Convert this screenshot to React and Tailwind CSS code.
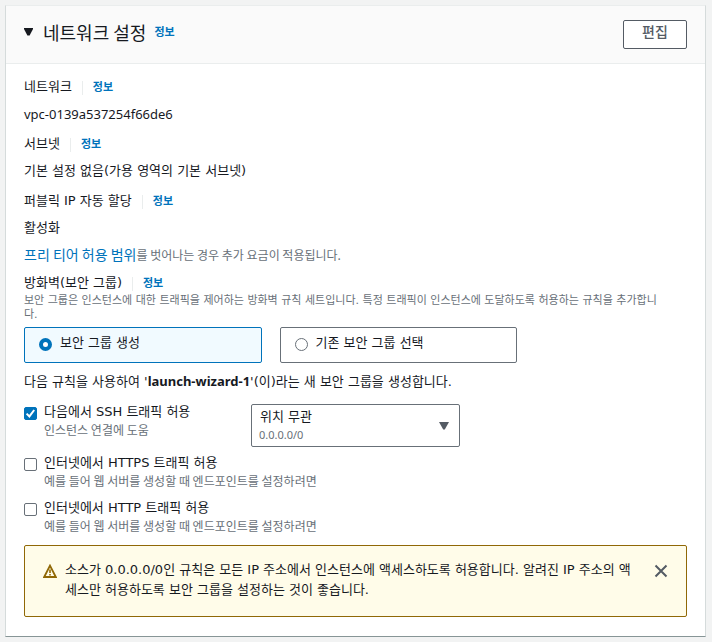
import { useId } from "react";

function InfoLink() {
  return (
    <a href="#info" className="pt-0.5 text-[11px] font-bold text-[#0073bb]">
      정보
    </a>
  );
}

function FieldLabel({ children }) {
  return (
    <div className="flex h-[22px] items-center leading-[22px]">
      <span>{children}</span>
      <span className="mr-2.5 ml-2.5 h-3.5 w-px translate-y-px bg-[#eaeded]" />
      <InfoLink />
    </div>
  );
}

function Field({ label, children }) {
  return (
    <div className="flex flex-col gap-[5px] leading-[22px]">
      <FieldLabel>{label}</FieldLabel>
      {children}
    </div>
  );
}

function RadioTile({ label, defaultChecked }) {
  return (
    <label className="flex h-9 w-full items-center gap-2 rounded-xs border border-[#687078] bg-white px-3.5 pb-1 has-checked:border-[#0073bb] has-checked:bg-[#f1faff]">
      <input
        type="radio"
        name="security-group"
        defaultChecked={defaultChecked}
        className="mt-0.5 size-[13px] shrink-0 appearance-none rounded-full border border-[#687078] bg-white checked:border-4 checked:border-[#0073bb]"
      />
      <span>{label}</span>
    </label>
  );
}

function CheckRow({ label, description, defaultChecked }) {
  const id = useId();
  return (
    <div className="flex gap-[7px]">
      <span className="mt-[5px] grid size-[13px] shrink-0">
        <input
          id={id}
          type="checkbox"
          aria-describedby={id + "-description"}
          defaultChecked={defaultChecked}
          className="peer col-start-1 row-start-1 size-[13px] appearance-none rounded-xs border border-[#687078] bg-white checked:border-[#0073bb] checked:bg-[#0073bb]"
        />
        <svg
          viewBox="0 0 13 13"
          className="pointer-events-none invisible col-start-1 row-start-1 size-[13px] peer-checked:visible"
          fill="none"
          stroke="#fff"
          strokeWidth="2"
        >
          <path d="M2.6 6.6 5.4 9.4 10.2 3" />
        </svg>
      </span>
      <div>
        <label htmlFor={id} className="block leading-5">
          {label}
        </label>
        <p
          id={id + "-description"}
          className="font-['Noto_Sans_CJK_KR',sans-serif] text-xs leading-[15px] text-[#687078]"
        >
          {description}
        </p>
      </div>
    </div>
  );
}

export default function App() {
  return (
    <div className="min-h-screen bg-[#f2f3f3] pt-[5px] pr-1.5 pb-[5px] pl-[5px] font-['DejaVu_Sans','Noto_Sans_CJK_KR',sans-serif] text-[13px] text-[#16191f]">
      <section className="border-x border-t border-b border-x-[#d5dbdb] border-t-[#eaeded] border-b-[#879596] bg-white">
        <header className="flex items-start justify-between border-b border-[#eaeded] bg-[#fafafa] px-[18px] pt-3.5 pb-3.5">
          <div className="flex items-center gap-2">
            <button type="button" aria-label="네트워크 설정 접기" className="flex pr-0.5">
              <svg viewBox="0 0 9 8" className="h-2 w-[9px]" fill="#16191f">
                <path d="M0 0h9v1L5.6 7.4H3.4L0 1z" />
              </svg>
            </button>
            <h2 className="font-['Noto_Sans_CJK_KR',sans-serif] text-lg leading-6">네트워크 설정</h2>
            <InfoLink />
          </div>
          <button
            type="button"
            className="h-[29px] w-16 rounded-xs border border-[#545b64] bg-white pb-1.5 text-sm leading-5 font-medium text-[#545b64]"
          >
            편집
          </button>
        </header>

        <div className="px-[18px] pt-3 pb-[19px]">
          <div className="flex flex-col gap-2">
            <Field label="네트워크">
              <p className="font-['Noto_Sans',sans-serif]">vpc-0139a537254f66de6</p>
            </Field>
            <Field label="서브넷">
              <p>기본 설정 없음(가용 영역의 기본 서브넷)</p>
            </Field>
            <Field label="퍼블릭 IP 자동 할당">
              <p>활성화</p>
              <p className="font-['Noto_Sans_CJK_KR',sans-serif] text-xs leading-[22px] text-[#687078]">
                <a href="#free-tier" className="text-sm leading-none text-[#0073bb]">
                  프리 티어 허용 범위
                </a>
                를 벗어나는 경우 추가 요금이 적용됩니다.
              </p>
            </Field>
          </div>

          <fieldset className="mt-1.5">
            <legend>
              <FieldLabel>방화벽(보안 그룹)</FieldLabel>
            </legend>
            <p className="text-[11px] leading-[14px] break-all text-[#687078]">
              보안 그룹은 인스턴스에 대한 트래픽을 제어하는 방화벽 규칙 세트입니다. 특정 트래픽이 인스턴스에 도달하도록 허용하는
              규칙을 추가합니
              <br />
              다.
            </p>
            <div className="mt-[5px] flex max-w-[493px] gap-[18px]">
              <RadioTile label="보안 그룹 생성" defaultChecked />
              <RadioTile label="기존 보안 그룹 선택" />
            </div>
          </fieldset>

          <p className="mt-2 leading-[22px]">
            다음 규칙을 사용하여 '<b className="font-['Noto_Sans',sans-serif] leading-none">launch-wizard-1</b>
            '(이)라는 새 보안 그룹을 생성합니다.
          </p>

          <div className="mt-[9px] grid grid-cols-[227px_1fr]">
            <CheckRow label="다음에서 SSH 트래픽 허용" description="인스턴스 연결에 도움" defaultChecked />
            <div className="relative mt-0.5 h-[43px] max-w-[209px]">
              <select
                aria-label="소스 유형"
                aria-describedby="source-cidr"
                className="size-full appearance-none rounded-xs border border-[#687078] bg-white px-2 pb-[18px] leading-5"
              >
                <option>위치 무관</option>
              </select>
              <span
                id="source-cidr"
                className="pointer-events-none absolute bottom-[5px] left-2 font-['Noto_Sans',sans-serif] text-[11px] leading-[15px] text-[#687078]"
              >
                0.0.0.0/0
              </span>
              <svg viewBox="0 0 10 8" className="pointer-events-none absolute top-[18px] right-[11px] h-2 w-2.5" fill="#545b64">
                <path d="M0 0h10L5.8 7.6H4.2z" />
              </svg>
            </div>
          </div>
          <div className="mt-1.5 flex flex-col gap-2.5">
            <CheckRow label="인터넷에서 HTTPS 트래픽 허용" description="예를 들어 웹 서버를 생성할 때 엔드포인트를 설정하려면" />
            <CheckRow label="인터넷에서 HTTP 트래픽 허용" description="예를 들어 웹 서버를 생성할 때 엔드포인트를 설정하려면" />
          </div>

          <div
            role="alert"
            className="mt-3 flex items-start rounded-xs border border-[#906806] bg-[#fffce9] px-[18px] pt-3.5 pb-4"
          >
            <svg viewBox="0 0 14 14" className="mt-1 size-3.5 shrink-0" fill="none" stroke="#906806" strokeWidth="1.8">
              <path d="M7 1.6 12.8 13H1.2z" />
              <path d="M7 5.4v3.6M7 10v1.6" strokeWidth="1.6" />
            </svg>
            <p className="mr-3 ml-2 flex-1 leading-5 break-all">
              소스가 0.0.0.0/0인 규칙은 모든 IP 주소에서 인스턴스에 액세스하도록 허용합니다. 알려진 IP 주소의 액세스만 허용하도록
              보안 그룹을 설정하는 것이 좋습니다.
            </p>
            <button type="button" aria-label="닫기" className="mt-1">
              <svg viewBox="0 0 14 14" className="size-3.5" fill="none" stroke="#545b64" strokeWidth="2">
                <path d="M1.5 1.5 12.5 12.5M12.5 1.5 1.5 12.5" />
              </svg>
            </button>
          </div>
        </div>
      </section>
    </div>
  );
}
